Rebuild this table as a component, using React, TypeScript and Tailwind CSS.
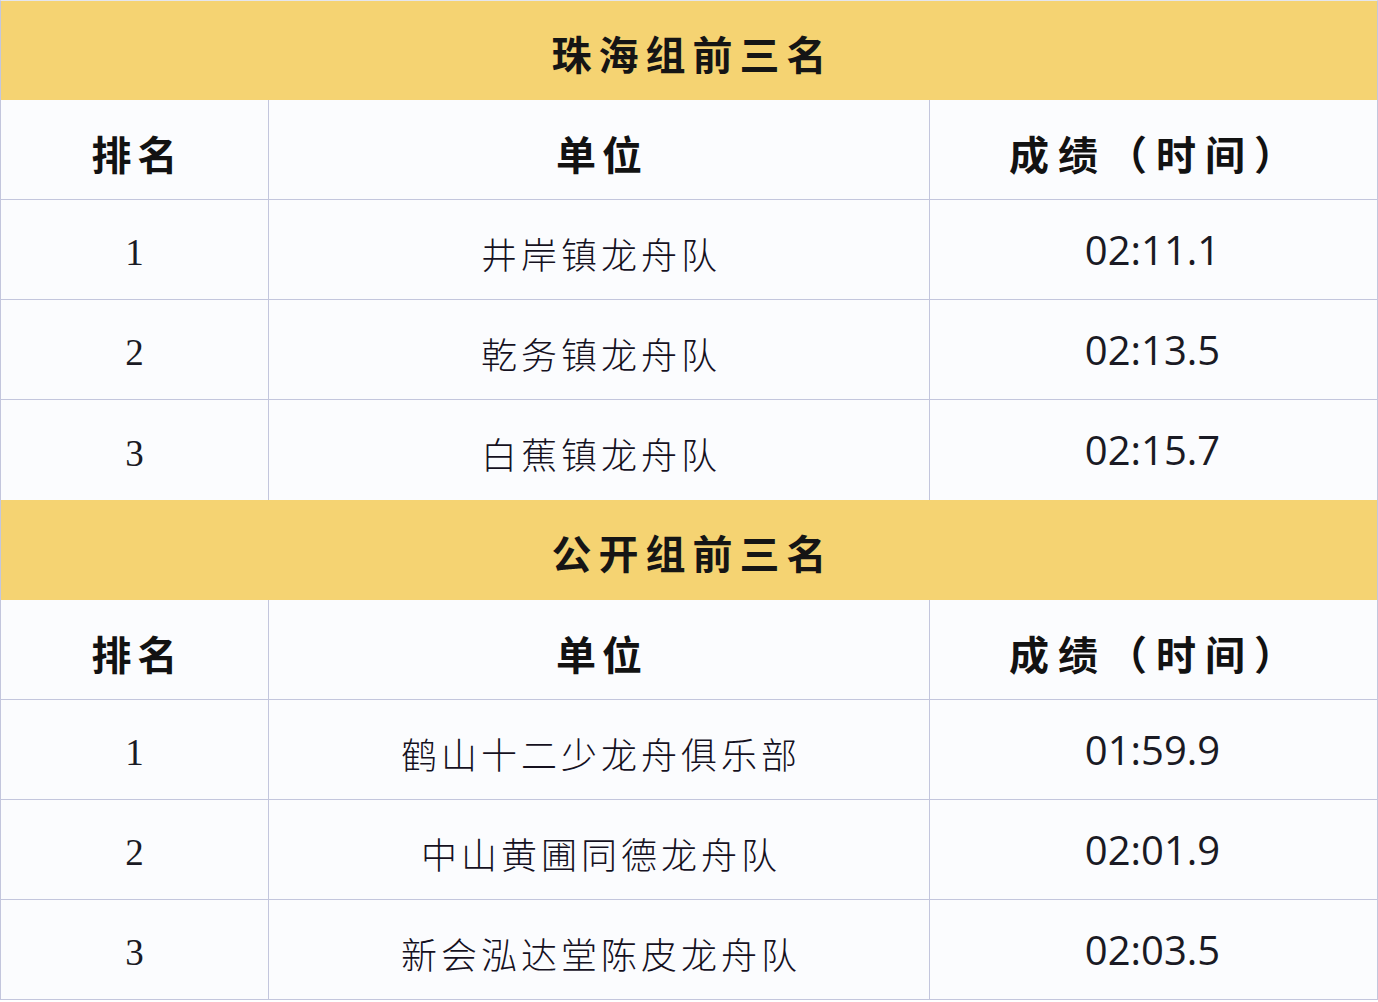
import React from "react";

const cjk = "font-['Noto_Sans_CJK_SC',sans-serif]";

type Row = { rank: string; unit: string; time: string };

const groups: { title: string; rows: Row[] }[] = [
  {
    title: "珠海组前三名",
    rows: [
      { rank: "1", unit: "井岸镇龙舟队", time: "02:11.1" },
      { rank: "2", unit: "乾务镇龙舟队", time: "02:13.5" },
      { rank: "3", unit: "白蕉镇龙舟队", time: "02:15.7" },
    ],
  },
  {
    title: "公开组前三名",
    rows: [
      { rank: "1", unit: "鹤山十二少龙舟俱乐部", time: "01:59.9" },
      { rank: "2", unit: "中山黄圃同德龙舟队", time: "02:01.9" },
      { rank: "3", unit: "新会泓达堂陈皮龙舟队", time: "02:03.5" },
    ],
  },
];

function Group({ title, rows, first, last }: { title: string; rows: Row[]; first: boolean; last: boolean }) {
  return (
    <div>
      <div
        className={`${first ? "h-[99px]" : "h-[100px]"} bg-[#f5d372] flex items-center justify-center pt-[4px]`}
      >
        <span className={`${cjk} text-[40px] font-bold tracking-[7px] text-[#151515] leading-none pl-[7px]`}>
          {title}
        </span>
      </div>
      <div className="h-[100px] flex border-b border-[#c3c6dd]">
        <div className="w-[268px] border-r border-[#c3c6dd] flex items-center justify-center pt-[6px]">
          <span className={`${cjk} text-[40px] font-bold tracking-[6px] pl-[6px] leading-none text-[#121212]`}>排名</span>
        </div>
        <div className="w-[661px] border-r border-[#c3c6dd] flex items-center justify-center pt-[6px]">
          <span className={`${cjk} text-[40px] font-bold tracking-[6px] pl-[6px] leading-none text-[#121212]`}>单位</span>
        </div>
        <div className="flex-1 flex items-center justify-center pt-[6px] pr-[4px]">
          <span className={`${cjk} text-[40px] font-bold tracking-[9px] pl-[9px] leading-none text-[#121212]`}>成绩（时间）</span>
        </div>
      </div>
      {rows.map((r, i) => {
        const isLast = i === rows.length - 1;
        return (
          <div
            key={i}
            className={`h-[100px] flex ${isLast && !last ? "" : "border-b border-[#c3c6dd]"}`}
          >
            <div className="w-[268px] border-r border-[#c3c6dd] flex items-center justify-center pt-[6px]">
              <span className="font-['Liberation_Serif',serif] text-[37px] leading-none text-[#1a1a24]">{r.rank}</span>
            </div>
            <div className="w-[661px] border-r border-[#c3c6dd] flex items-center justify-center pt-[6px]">
              <span className={`${cjk} text-[36px] font-light tracking-[4px] pl-[4px] leading-none text-[#15111f]`}>
                {r.unit}
              </span>
            </div>
            <div className="flex-1 flex items-center justify-center pr-[2px]">
              <span className="font-['Open_Sans',sans-serif] text-[40px] leading-none text-[#1a1a24]">{r.time}</span>
            </div>
          </div>
        );
      })}
    </div>
  );
}

export default function App() {
  return (
    <div className="w-[1378px] h-[1002px] bg-white">
      <div className="w-[1378px] bg-[#fbfcfe] border-t border-t-[#e4e6ee] border-l border-r border-[#c3c6dd]">
        {groups.map((g, i) => (
          <Group
            key={i}
            title={g.title}
            rows={g.rows}
            first={i === 0}
            last={i === groups.length - 1}
          />
        ))}
      </div>
    </div>
  );
}
